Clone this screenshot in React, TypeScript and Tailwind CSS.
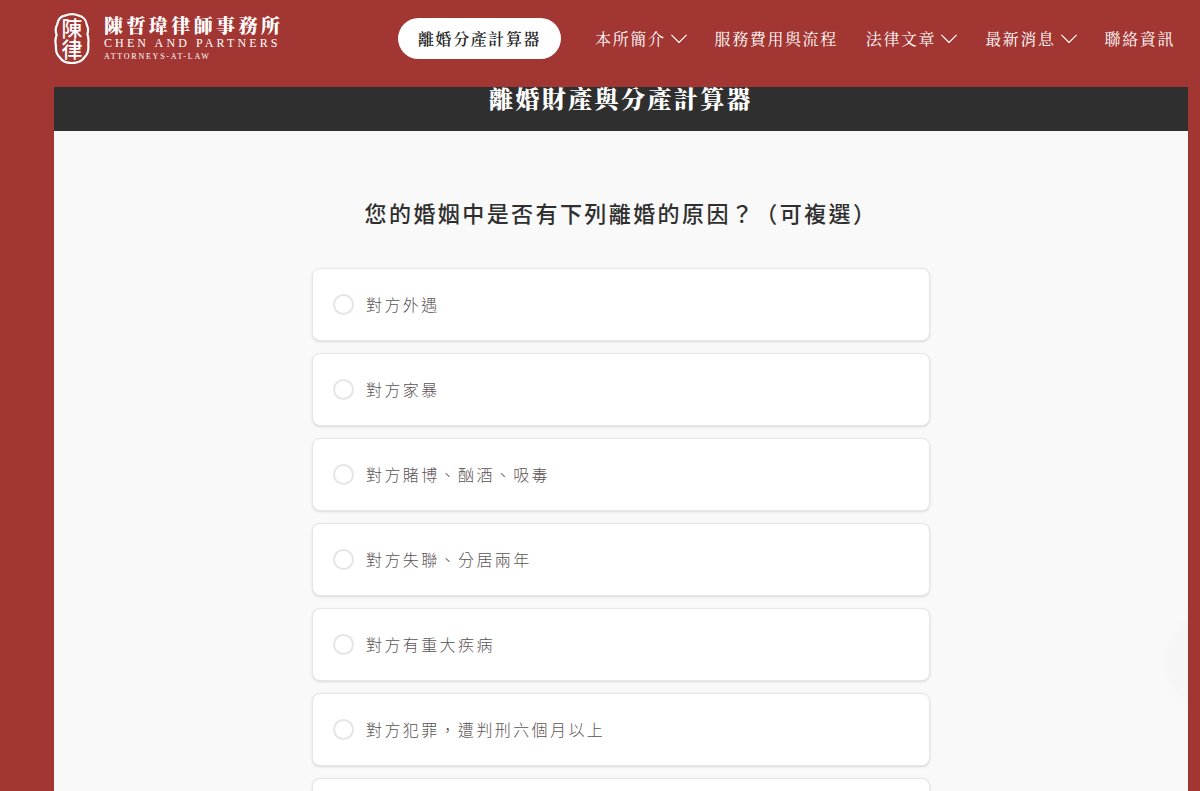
import React from 'react';

const SERIF = "font-['Noto_Serif_CJK_TC','Noto_Serif_TC','Liberation_Serif','Noto_Sans_CJK_TC',serif]";

const navItems = [
  { label: '本所簡介', hasMenu: true },
  { label: '服務費用與流程', hasMenu: false },
  { label: '法律文章', hasMenu: true },
  { label: '最新消息', hasMenu: true },
  { label: '聯絡資訊', hasMenu: false },
];

const reasons = [
  { id: 'affair', label: '對方外遇' },
  { id: 'violence', label: '對方家暴' },
  { id: 'addiction', label: '對方賭博、酗酒、吸毒' },
  { id: 'separation', label: '對方失聯、分居兩年' },
  { id: 'illness', label: '對方有重大疾病' },
  { id: 'crime', label: '對方犯罪，遭判刑六個月以上' },
  { id: 'other', label: '' },
];

const ChevronDown = () => (
  <svg width="16" height="10" viewBox="0 0 16 10" fill="none" stroke="currentColor" aria-hidden="true">
    <path d="M0.7 1.2L8 8.5L15.3 1.2" strokeWidth="1.1" strokeLinecap="round" strokeLinejoin="round" />
  </svg>
);

const Seal = () => (
  <svg width="36" height="52" viewBox="0 0 36 52" aria-hidden="true" className="shrink-0">
    <path
      d="M12 3.4C15 1.6 21 1.6 24 3.4C29 4.2 32.4 8 32.8 13C34.4 16 34.4 19 33.4 22C34.4 25 34.8 29 34.2 32C34.8 37 33.8 42 31 44.6C28.5 48.6 23.5 51 18 51C12 51 8 48.9 6 45.6C2.8 43 1.6 39 2 34C1.1 30 1.4 26 2.6 23C1.2 19 1.4 15.5 3.2 12.5C3.8 7.4 7 4 12 3.4Z"
      fill="none"
      stroke="#fff"
      strokeWidth="2.2"
    />
    <g
      fill="#fff"
      fontWeight="500"
      fontSize="21"
      textAnchor="middle"
      className="font-['Noto_Sans_CJK_TC',sans-serif]"
    >
      <text x="18" y="24">陳</text>
      <text x="18" y="45">律</text>
    </g>
  </svg>
);

const Logo = () => (
  <a href="#" className="flex items-center gap-3.5 text-white">
    <Seal />
    <span className="flex flex-col whitespace-nowrap font-['Liberation_Serif',serif]">
      <span className={`text-[19px] leading-[23px] font-black tracking-[0.18em] ${SERIF}`}>陳哲瑋律師事務所</span>
      <span className="text-[12px] leading-[14px] tracking-[0.26em]">CHEN AND PARTNERS</span>
      <span className="text-[8px] leading-[13px] tracking-[0.22em]">ATTORNEYS-AT-LAW</span>
    </span>
  </a>
);

const Header = () => (
  <header className="relative z-10 flex h-[87px] items-start justify-between bg-[#a23633] pr-[25px] pl-[54px]">
    <div className="pt-3">
      <Logo />
    </div>
    <nav className={`flex items-center gap-7 pt-[18px] text-base tracking-widest whitespace-nowrap text-white ${SERIF}`}>
      <a href="#" className="mr-1.5 rounded-full bg-white px-5 py-2 leading-[25px] font-semibold text-[#222]">
        離婚分產計算器
      </a>
      {navItems.map((item) => (
        <a key={item.label} href="#" className="flex items-center gap-[5px]">
          {item.label}
          {item.hasMenu && <ChevronDown />}
        </a>
      ))}
    </nav>
  </header>
);

const App = () => {
  const [selected, setSelected] = React.useState<string[]>([]);

  const toggle = (id: string) => {
    setSelected((prev) => (prev.includes(id) ? prev.filter((r) => r !== id) : [...prev, id]));
  };

  return (
    <div className="h-screen overflow-hidden bg-[#a23633]">
      <Header />
      <main className="relative -mt-[21px] mr-3 ml-[54px] bg-[#f9f9f9]">
        <h1 className={`bg-[#2f2f2f] pt-4 pb-[17px] text-center text-2xl leading-8 font-black tracking-widest text-white ${SERIF}`}>
          離婚財產與分產計算器
        </h1>
        <form className="mx-auto max-w-[618px] pt-[65px] font-['Noto_Sans_CJK_TC',sans-serif]">
          <fieldset>
            <legend className="w-full text-center text-[22px] leading-8 font-medium tracking-[0.11em] whitespace-nowrap text-[#2f2f2f]">
              您的婚姻中是否有下列離婚的原因？（可複選）
            </legend>
            <div className="flex flex-col gap-3 pt-10">
              {reasons.map((reason) => (
                <label
                  key={reason.id}
                  className="flex items-center gap-3 rounded-lg border border-[#e6e6e6] bg-white px-5 py-[23px] text-base leading-[25px] font-light tracking-[0.15em] text-[#5c5354] shadow-sm"
                >
                  <input
                    type="checkbox"
                    checked={selected.includes(reason.id)}
                    onChange={() => toggle(reason.id)}
                    className="my-0.5 size-[21px] shrink-0 appearance-none rounded-full border-2 border-[#e5e5e5] bg-white checked:border-[#a23633] checked:bg-[#a23633]"
                  />
                  {reason.label}
                </label>
              ))}
            </div>
          </fieldset>
        </form>
      </main>
      <div className="pointer-events-none fixed top-[614px] -right-[62px] size-24 rounded-full bg-black/1 shadow-[0_0_12px_rgba(0,0,0,0.02)]" />
    </div>
  );
};

export default App;
